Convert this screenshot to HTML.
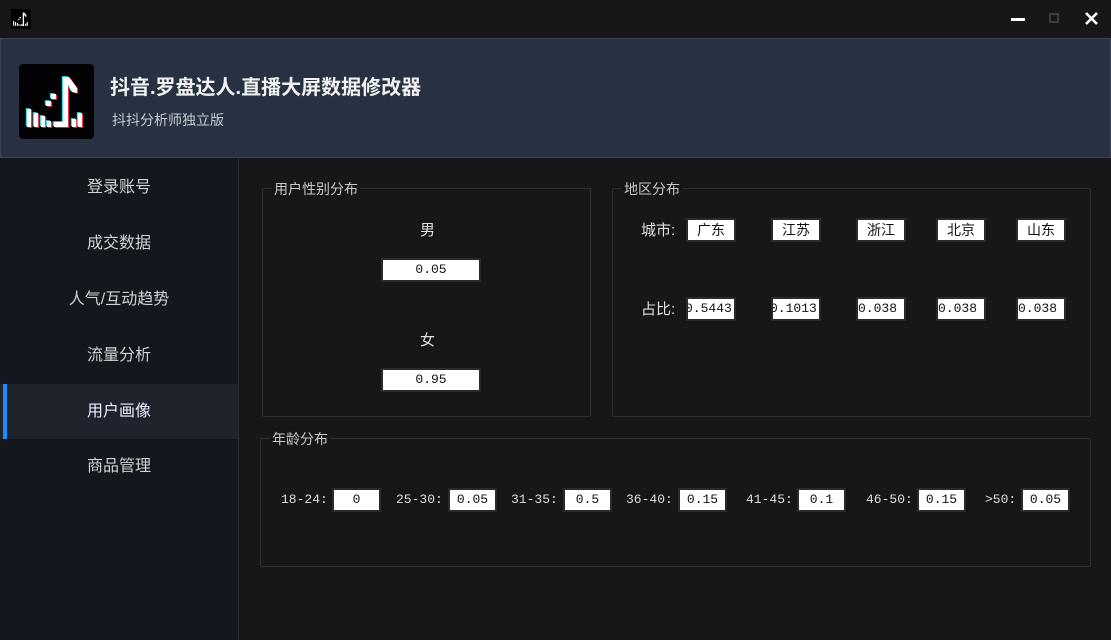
<!DOCTYPE html>
<html><head><meta charset="utf-8"><style>
*{margin:0;padding:0;box-sizing:border-box}
body{width:1111px;height:640px;background:#17171a;font-family:"Liberation Sans","Noto Sans CJK SC",sans-serif;color:#ddd;position:relative;overflow:hidden}
.a{position:absolute}
.hdr{left:0;top:38px;width:1111px;height:120px;background:#283142;border:1px solid #3b4354}
.side{left:0;top:158px;width:239px;height:482px;background:#14171d;border-right:1px solid #2a2d33}
.nav{left:0;width:238px;height:55px;text-align:center;line-height:55px;font-size:16px;color:#cfd2d8}
.grp{border:1px solid #2e2f33;border-radius:2px}
.gt{font-size:14px;color:#c8c8c8;background:#17171a;padding:0 2px;line-height:16px}
.in{background:#fff;color:#111;border:2px solid #2a2a2d;outline:none;font-family:"Liberation Mono","Noto Sans CJK SC",monospace;font-size:13px;height:24px;line-height:20px;text-align:center;overflow:hidden;white-space:nowrap}
.lb{font-family:"Liberation Mono","Noto Sans CJK SC",monospace;font-size:13px;color:#ddd;line-height:24px}
.cn{font-size:15px;color:#e0e0e0}
</style></head><body>
<svg class="a" style="left:11px;top:9px" width="20" height="20" viewBox="0 0 75 75"><rect width="75" height="75" fill="#000"/><g fill="#fff"><rect x="8" y="45" width="4" height="18"/><rect x="15" y="49" width="4" height="14"/><rect x="22" y="52" width="4" height="11"/><rect x="28" y="57" width="4" height="6"/><rect x="27" y="37" width="5" height="5"/><rect x="32" y="30" width="5" height="5"/><rect x="44" y="13" width="5" height="50"/><polygon points="46,13 50,13 58,24 58,29 53,28 49,20"/><rect x="35" y="58" width="14" height="5"/><rect x="53" y="55" width="4" height="8"/><rect x="59" y="49" width="4" height="14"/></g></svg>
<div class="a" style="left:1011px;top:18px;width:14px;height:3px;background:#fff"></div>
<div class="a" style="left:1049px;top:13px;width:10px;height:10px;border:2px solid #3c3c40"></div>
<svg class="a" style="left:1084px;top:11px" width="15" height="15"><path d="M2 2L13 13M13 2L2 13" stroke="#fff" stroke-width="2.6"/></svg>

<div class="a hdr"></div>
<svg class="a" style="left:19px;top:64px;border-radius:4px" width="75" height="75" viewBox="0 0 75 75"><rect width="75" height="75" rx="4" fill="#020204"/>
<g fill="#e6344f" transform="translate(1.2,0.8)"><rect x="8" y="45" width="4" height="18"/><rect x="15" y="49" width="4" height="14"/><rect x="22" y="52" width="4" height="11"/><rect x="28" y="57" width="4" height="6"/><rect x="27" y="37" width="5" height="5"/><rect x="32" y="30" width="5" height="5"/><rect x="44" y="13" width="5" height="50"/><polygon points="46,13 50,13 58,24 58,29 53,28 49,20"/><rect x="35" y="58" width="14" height="5"/><rect x="53" y="55" width="4" height="8"/><rect x="59" y="49" width="4" height="14"/></g>
<g fill="#40e0d8" transform="translate(-1.2,-0.8)"><rect x="8" y="45" width="4" height="18"/><rect x="15" y="49" width="4" height="14"/><rect x="22" y="52" width="4" height="11"/><rect x="28" y="57" width="4" height="6"/><rect x="27" y="37" width="5" height="5"/><rect x="32" y="30" width="5" height="5"/><rect x="44" y="13" width="5" height="50"/><polygon points="46,13 50,13 58,24 58,29 53,28 49,20"/><rect x="35" y="58" width="14" height="5"/><rect x="53" y="55" width="4" height="8"/><rect x="59" y="49" width="4" height="14"/></g>
<g fill="#fff"><rect x="8" y="45" width="4" height="18"/><rect x="15" y="49" width="4" height="14"/><rect x="22" y="52" width="4" height="11"/><rect x="28" y="57" width="4" height="6"/><rect x="27" y="37" width="5" height="5"/><rect x="32" y="30" width="5" height="5"/><rect x="44" y="13" width="5" height="50"/><polygon points="46,13 50,13 58,24 58,29 53,28 49,20"/><rect x="35" y="58" width="14" height="5"/><rect x="53" y="55" width="4" height="8"/><rect x="59" y="49" width="4" height="14"/></g></svg>
<div class="a" style="left:110px;top:71px;font-size:20px;font-weight:bold;color:#f2f2f2">抖音.罗盘达人.直播大屏数据修改器</div>
<div class="a" style="left:112px;top:110px;font-size:14px;color:#c8ccd4">抖抖分析师独立版</div>

<div class="a side"></div>
<div class="a nav" style="top:160px">登录账号</div>
<div class="a nav" style="top:216px">成交数据</div>
<div class="a nav" style="top:272px">人气/互动趋势</div>
<div class="a nav" style="top:328px">流量分析</div>
<div class="a nav" style="top:384px;background:#1f232b;color:#eef">用户画像</div>
<div class="a" style="left:3px;top:384px;width:4px;height:55px;background:#1a8cff"></div>
<div class="a nav" style="top:439px">商品管理</div>

<div class="a grp" style="left:262px;top:188px;width:329px;height:229px"></div>
<div class="a gt" style="left:272px;top:181px">用户性别分布</div>
<div class="a cn" style="left:420px;top:219px">男</div>
<div class="a in" style="left:381px;top:258px;width:100px">0.05</div>
<div class="a cn" style="left:420px;top:329px">女</div>
<div class="a in" style="left:381px;top:368px;width:100px">0.95</div>

<div class="a grp" style="left:612px;top:188px;width:479px;height:229px"></div>
<div class="a gt" style="left:622px;top:181px">地区分布</div>
<div class="a cn" style="left:641px;top:219px">城市:</div>
<div class="a cn" style="left:641px;top:298px">占比:</div>
<div class="a in" style="left:686px;top:218px;width:50px;font-family:'Noto Sans CJK SC',sans-serif;font-size:14px">广东</div>
<div class="a in" style="left:771px;top:218px;width:50px;font-family:'Noto Sans CJK SC',sans-serif;font-size:14px">江苏</div>
<div class="a in" style="left:856px;top:218px;width:50px;font-family:'Noto Sans CJK SC',sans-serif;font-size:14px">浙江</div>
<div class="a in" style="left:936px;top:218px;width:50px;font-family:'Noto Sans CJK SC',sans-serif;font-size:14px">北京</div>
<div class="a in" style="left:1016px;top:218px;width:50px;font-family:'Noto Sans CJK SC',sans-serif;font-size:14px">山东</div>
<div class="a in" style="left:686px;top:297px;width:50px;text-align:left;text-indent:-3px">0.5443</div>
<div class="a in" style="left:771px;top:297px;width:50px;text-align:left;text-indent:-3px">0.1013</div>
<div class="a in" style="left:856px;top:297px;width:50px;text-align:left">0.038</div>
<div class="a in" style="left:936px;top:297px;width:50px;text-align:left">0.038</div>
<div class="a in" style="left:1016px;top:297px;width:50px;text-align:left">0.038</div>

<div class="a grp" style="left:260px;top:438px;width:831px;height:129px"></div>
<div class="a gt" style="left:270px;top:431px">年龄分布</div>
<div class="a lb" style="left:281px;top:488px">18-24:</div><div class="a in" style="left:332px;top:488px;width:49px">0</div>
<div class="a lb" style="left:396px;top:488px">25-30:</div><div class="a in" style="left:448px;top:488px;width:49px">0.05</div>
<div class="a lb" style="left:511px;top:488px">31-35:</div><div class="a in" style="left:563px;top:488px;width:49px">0.5</div>
<div class="a lb" style="left:626px;top:488px">36-40:</div><div class="a in" style="left:678px;top:488px;width:49px">0.15</div>
<div class="a lb" style="left:746px;top:488px">41-45:</div><div class="a in" style="left:797px;top:488px;width:49px">0.1</div>
<div class="a lb" style="left:866px;top:488px">46-50:</div><div class="a in" style="left:917px;top:488px;width:49px">0.15</div>
<div class="a lb" style="left:985px;top:488px">&gt;50:</div><div class="a in" style="left:1021px;top:488px;width:49px">0.05</div>
</body></html>
